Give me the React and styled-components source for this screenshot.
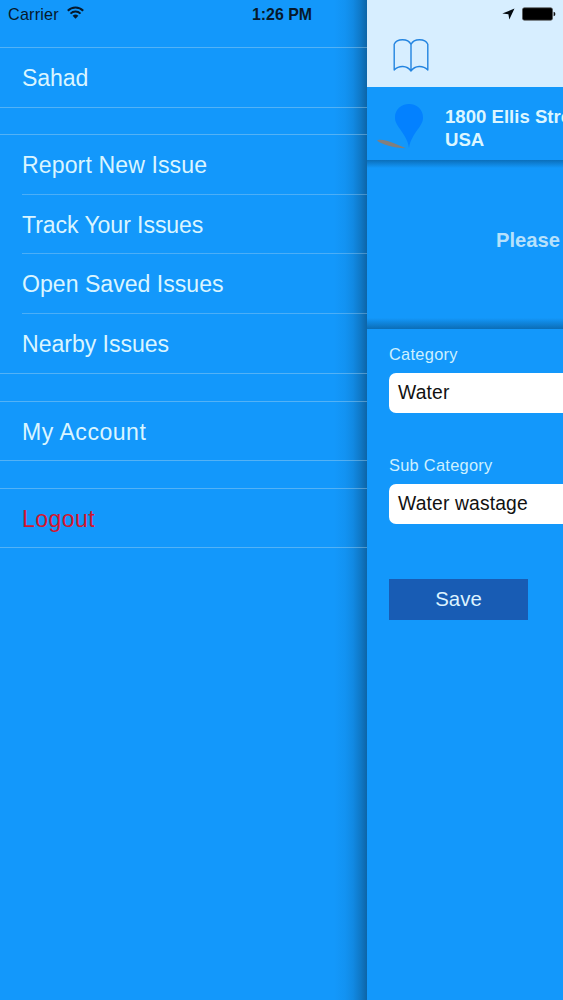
import styled, { createGlobalStyle } from "styled-components";

const GlobalStyle = createGlobalStyle`
  * {
    box-sizing: border-box;
  }

  body {
    margin: 0;
    background: #1398fb;
    font-family: "Liberation Sans", Arial, sans-serif;
  }
`;

const StyledScreen = styled.div`
  display: grid;
  grid-template-columns: 367px 1fr;
  width: 563px;
  height: 1000px;
  overflow: hidden;
  background: #1398fb;
`;

const StyledMenu = styled.nav`
  background: linear-gradient(
    to right,
    transparent 334px,
    rgba(8, 60, 100, 0.06) 345px,
    rgba(8, 60, 100, 0.16) 353px,
    rgba(8, 60, 100, 0.36) 361px,
    rgba(8, 60, 100, 0.56) 367px
  );
`;

const StyledStatus = styled.div`
  display: flex;
  align-items: center;
  height: 28px;
  padding: ${(props) => props.$padding};
  color: #06192b;
  font-size: 16.2px;
  letter-spacing: 0.2px;
  line-height: 28px;
`;

const StyledWifi = styled.svg`
  margin-left: 8px;
  margin-top: -3px;
`;

const StyledTime = styled.span`
  margin-left: auto;
  padding-top: 1px;
  font-size: 15.9px;
  font-weight: bold;
  letter-spacing: 0;
`;

const StyledMenuGroup = styled.ul`
  list-style: none;
  margin: ${(props) => props.$gap} 0 0;
  padding: 0;
  border-top: 1px solid rgba(190, 220, 240, 0.38);
  border-bottom: 1px solid rgba(190, 220, 240, 0.38);
`;

const StyledMenuItem = styled.li`
  height: ${(props) => props.$height}px;
  padding-left: 22px;
  color: ${(props) => (props.$danger ? "#d3152f" : "#daf5ff")};
  font-size: 23.1px;
  letter-spacing: ${(props) => props.$tracking}px;
  line-height: 60px;
  background: linear-gradient(rgba(190, 220, 240, 0.33), rgba(190, 220, 240, 0.33))
    22px 100% / 100% 1px no-repeat;

  &:last-child {
    background: none;
  }
`;

const StyledPanel = styled.main`
  min-width: 0;
  overflow: hidden;
  background: #1398fb;
`;

const StyledHeader = styled.header`
  height: 87px;
  background: #d7eeff;
`;

const StyledBattery = styled.svg`
  margin-left: 7px;
`;

const StyledBookButton = styled.button`
  display: block;
  margin: 10px 0 0 26px;
  padding: 0;
  border: 0;
  background: none;
`;

const StyledAddress = styled.div`
  display: flex;
  height: 73px;
  padding-left: 10px;
`;

const StyledPin = styled.svg`
  flex: none;
  margin-top: 14px;
`;

const StyledAddressText = styled.p`
  flex: none;
  margin: 19px 0 0 11px;
  color: #dcf6ff;
  font-size: 18.6px;
  font-weight: bold;
  line-height: 22.5px;
  white-space: nowrap;
`;

const StyledPhotoArea = styled.div`
  height: 169px;
  padding: 69px 0 0 129px;
  color: #b7e1fb;
  font-size: 20.2px;
  font-weight: bold;
  line-height: 23px;
  white-space: nowrap;
  background:
    linear-gradient(#0b6fba, rgba(11, 111, 186, 0)) 0 0 / 100% 8px no-repeat,
    linear-gradient(rgba(11, 111, 186, 0), #0b6db6) 0 100% / 100% 11px no-repeat;
`;

const StyledForm = styled.div`
  padding: 14px 0 0 22px;
`;

const StyledField = styled.div`
  height: 111px;
`;

const StyledLabel = styled.div`
  color: #cdf0ff;
  font-size: 16.4px;
  letter-spacing: 0.28px;
  line-height: 22px;
`;

const StyledInput = styled.div`
  height: 40px;
  margin-top: 8px;
  padding-left: 9px;
  border-radius: 7px 0 0 7px;
  background: #fff;
  color: #111;
  font-size: 19.3px;
  letter-spacing: 0.15px;
  line-height: 39px;
`;

const StyledSaveButton = styled.button`
  display: block;
  width: 139px;
  height: 41px;
  margin-top: 14px;
  padding: 0;
  border: 0;
  background: #185cb4;
  color: #dcf3ff;
  font-family: inherit;
  font-size: 20.4px;
  line-height: 41px;
`;

const menuGroups = [
  { gap: "19px", height: 59, items: [{ label: "Sahad", tracking: -0.1 }] },
  {
    gap: "26px",
    height: 59.5,
    items: [
      { label: "Report New Issue", tracking: 0.1 },
      { label: "Track Your Issues", tracking: -0.08 },
      { label: "Open Saved Issues", tracking: 0 },
      { label: "Nearby Issues", tracking: -0.04 },
    ],
  },
  { gap: "27px", height: 58, items: [{ label: "My Account", tracking: 0.5 }] },
  { gap: "27px", height: 58, items: [{ label: "Logout", tracking: 0.4, danger: true }] },
];

const Menu = () => {
  return (
    <StyledMenu>
      <StyledStatus $padding="0 55px 0 8px">
        <span>Carrier</span>
        <StyledWifi width="17" height="13" viewBox="0 0 17 13" fill="none" stroke="#06192b" strokeWidth="2">
          <path d="M.8 4.7 C5 .4 12 .4 16.2 4.7" />
          <path d="M3.5 7.6 C6.3 4.9 10.7 4.9 13.5 7.6" />
          <path d="M5.6 9.8 Q8.5 7.2 11.4 9.8 L8.5 12.8 Z" fill="#06192b" stroke="none" />
        </StyledWifi>
        <StyledTime>1:26 PM</StyledTime>
      </StyledStatus>
      {menuGroups.map((group) => (
        <StyledMenuGroup key={group.items[0].label} $gap={group.gap}>
          {group.items.map((item) => (
            <StyledMenuItem
              key={item.label}
              $height={group.height}
              $tracking={item.tracking}
              $danger={item.danger}
            >
              {item.label}
            </StyledMenuItem>
          ))}
        </StyledMenuGroup>
      ))}
    </StyledMenu>
  );
};

const IssuePanel = () => {
  return (
    <StyledPanel>
      <StyledHeader>
        <StyledStatus $padding="0 0 0 135px">
          <svg width="13" height="12" viewBox="0 0 13 12">
            <path d="M12.5 .5 L7.3 11.5 L6.4 6.3 L.3 5.6 Z" fill="#040a10" />
          </svg>
          <StyledBattery width="34" height="14" viewBox="0 0 34 14">
            <rect x=".5" y=".8" width="30" height="12.4" rx="1.8" fill="#000" stroke="#555" strokeWidth=".7" />
            <path d="M31.6 4.8 Q33.4 5 33.4 7 Q33.4 9 31.6 9.2 Z" fill="#111" />
          </StyledBattery>
        </StyledStatus>
        <StyledBookButton aria-label="Menu">
          <svg
            width="36"
            height="36"
            viewBox="0 0 36 36"
            fill="none"
            stroke="#2384e0"
            strokeWidth="1.4"
            strokeLinejoin="round"
          >
            <path d="M18 6.5 C16.5 3.3 13 1.8 9.5 1.8 C5.5 1.8 2.5 3.3 1.2 6.2 V32 C6 27.2 14 27.2 18 33 C22 27.2 30 27.2 34.8 32 V6.2 C33.5 3.3 30.5 1.8 26.5 1.8 C23 1.8 19.5 3.3 18 6.5 V33" />
          </svg>
        </StyledBookButton>
      </StyledHeader>
      <StyledAddress>
        <StyledPin width="57" height="50" viewBox="0 0 57 50">
          <path d="M0 39.6 C2 37.4 11 39.8 17 42.2 L29 47.3 C17 47.3 4 43.4 0 39.6 Z" fill="#827f7d" />
          <path d="M32 47 C31 39 27 34 21.5 26 C19 22 18 20 18 16.5 C18 8.5 24 3 32 3 C40 3 46 8.5 46 16.5 C46 20 45 22 42.5 26 C37.5 33 33 39 32 47 Z" fill="#0381ff" />
        </StyledPin>
        <StyledAddressText>
          1800 Ellis Street
          <br />
          USA
        </StyledAddressText>
      </StyledAddress>
      <StyledPhotoArea>Please</StyledPhotoArea>
      <StyledForm>
        <StyledField>
          <StyledLabel>Category</StyledLabel>
          <StyledInput>Water</StyledInput>
        </StyledField>
        <StyledField>
          <StyledLabel>Sub Category</StyledLabel>
          <StyledInput>Water wastage</StyledInput>
        </StyledField>
        <StyledSaveButton>Save</StyledSaveButton>
      </StyledForm>
    </StyledPanel>
  );
};

const App = () => {
  return (
    <>
      <GlobalStyle />
      <StyledScreen>
        <Menu />
        <IssuePanel />
      </StyledScreen>
    </>
  );
};

export default App;
